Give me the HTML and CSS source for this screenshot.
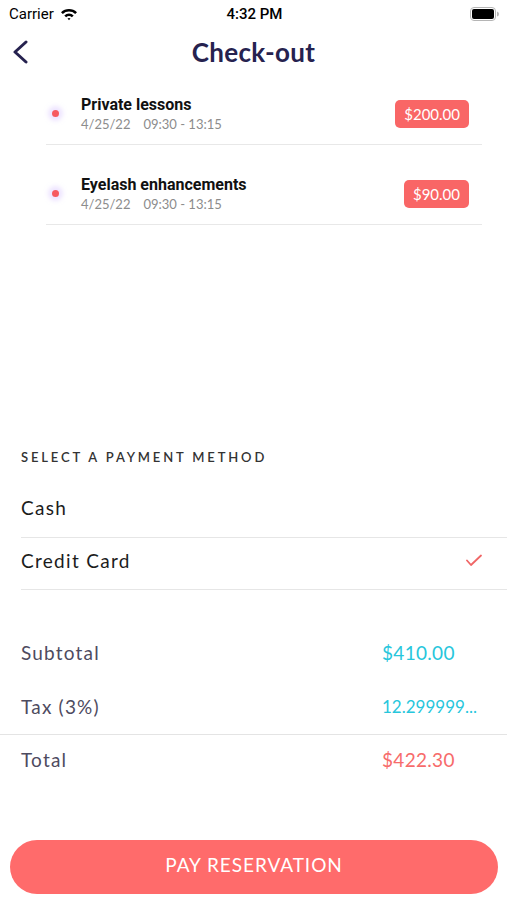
FILE: index.html
```html
<!DOCTYPE html>
<html lang="en">
<head>
  <meta charset="UTF-8">
  <meta name="viewport" content="width=device-width, initial-scale=1.0">
  <title>Check-out</title>
  <link rel="stylesheet" href="styles.css">
</head>
<body>
  <div class="status-bar">
    <div class="carrier">
      Carrier
      <svg class="wifi" width="18" height="14" viewBox="0 0 18 14">
        <path d="M1 5.2 A11.5 11.5 0 0 1 17 5.2 L15.2 7 A9 9 0 0 0 2.8 7 Z" fill="#000"/>
        <path d="M4.3 8.4 A6.8 6.8 0 0 1 13.7 8.4 L11.9 10.2 A4.3 4.3 0 0 0 6.1 10.2 Z" fill="#000"/>
        <path d="M7.5 11.6 A2.2 2.2 0 0 1 10.5 11.6 L9 13.2 Z" fill="#000"/>
      </svg>
    </div>
    <div class="clock">4:32 PM</div>
    <svg class="battery" width="30" height="14" viewBox="0 0 30 14">
      <rect x="0.5" y="0.5" width="25" height="13" rx="3.5" fill="none" stroke="#b5b5b5"/>
      <rect x="2" y="2" width="22" height="10" rx="2" fill="#000"/>
      <path d="M27 4.5 Q29 5 29 7 Q29 9 27 9.5 Z" fill="#b5b5b5"/>
    </svg>
  </div>

  <header class="nav-bar">
    <svg class="back" width="16" height="24" viewBox="0 0 16 24">
      <polyline points="14,2 3,12 14,22" fill="none" stroke="#26224f" stroke-width="3" stroke-linecap="round" stroke-linejoin="round"/>
    </svg>
    <h1>Check-out</h1>
  </header>

  <ul class="services">
    <li class="service">
      <span class="dot"></span>
      <div class="service-info">
        <div class="service-name">Private lessons</div>
        <div class="service-time"><span>4/25/22</span><span>09:30 - 13:15</span></div>
      </div>
      <span class="price">$200.00</span>
    </li>
    <li class="service">
      <span class="dot"></span>
      <div class="service-info">
        <div class="service-name">Eyelash enhancements</div>
        <div class="service-time"><span>4/25/22</span><span>09:30 - 13:15</span></div>
      </div>
      <span class="price">$90.00</span>
    </li>
  </ul>

  <section class="payment">
    <h2>Select a payment method</h2>
    <div class="method">Cash</div>
    <div class="method">
      Credit Card
      <svg class="check" width="16" height="13" viewBox="0 0 16 13">
        <polyline points="1,6.5 5,11 15,1.5" fill="none" stroke="#f06666" stroke-width="1.8" stroke-linecap="round" stroke-linejoin="round"/>
      </svg>
    </div>
  </section>

  <section class="summary">
    <div class="summary-row">
      <span class="label">Subtotal</span>
      <span class="value">$410.00</span>
    </div>
    <div class="summary-row">
      <span class="label">Tax (3%)</span>
      <span class="value tax">12.299999...</span>
    </div>
    <div class="summary-row total">
      <span class="label">Total</span>
      <span class="value">$422.30</span>
    </div>
  </section>

  <button class="pay-btn">PAY RESERVATION</button>
</body>
</html>
```

FILE: styles.css
```css
* {
  box-sizing: border-box;
}
body {
  margin: 0;
  width: 507px;
  min-height: 900px;
  display: flex;
  flex-direction: column;
  font-family: Lato, "Open Sans", sans-serif;
  background-color: #fff;
  color: #222;
}
.status-bar {
  height: 28px;
  display: flex;
  align-items: center;
  justify-content: space-between;
  padding: 0 7px 0 9px;
  font-family: Roboto, "Liberation Sans", sans-serif;
  font-size: 15px;
  color: #000;
}
.carrier {
  display: flex;
  align-items: center;
  gap: 6px;
  width: 120px;
}
.clock {
  font-weight: 500;
}
.status-bar .battery {
  display: block;
  width: 30px;
  margin-left: 90px;
}
.nav-bar {
  height: 48px;
  position: relative;
  display: flex;
  align-items: center;
  justify-content: center;
}
.back {
  position: absolute;
  left: 12px;
  top: 12px;
}
.nav-bar h1 {
  margin: 0;
  font-size: 26px;
  font-weight: 700;
  color: #26224f;
  letter-spacing: 0.3px;
}
.services {
  list-style: none;
  margin: 0 25px 0 46px;
  padding: 0;
}
.service {
  display: flex;
  align-items: center;
  padding: 30px 13px 12px 0;
  border-bottom: 1px solid #e8e8e8;
}
.service:first-child {
  padding-top: 19px;
}
.dot {
  width: 7px;
  height: 7px;
  border-radius: 50%;
  background-color: #f65a5f;
  margin-left: 6px;
  margin-right: 22px;
  box-shadow: 0 0 4px 4px rgba(222, 204, 255, 0.5);
}
.service-info {
  flex: 1;
}
.service-name {
  font-family: Roboto, "Liberation Sans", sans-serif;
  font-weight: 700;
  font-size: 16px;
  line-height: 20px;
  color: #111;
}
.service-time {
  margin-top: 1px;
  font-size: 13px;
  line-height: 16px;
  color: #8c8c8c;
  display: flex;
  gap: 13px;
}
.price {
  background-color: #f96666;
  color: #fff;
  font-size: 15px;
  height: 28px;
  line-height: 28px;
  padding: 0 9px;
  border-radius: 5px;
}
.payment {
  margin-top: 222px;
  padding-left: 21px;
}
.payment h2 {
  margin: 0 0 18px;
  font-size: 13px;
  font-weight: 600;
  line-height: 20px;
  letter-spacing: 2.85px;
  text-transform: uppercase;
  color: #333;
}
.method {
  height: 52px;
  display: flex;
  align-items: center;
  justify-content: space-between;
  padding: 0 25px 7px 0;
  font-size: 19px;
  letter-spacing: 1.3px;
  color: #1c1c1c;
  border-bottom: 1px solid #e6e6e6;
}
.method:first-of-type {
  height: 53px;
}
.summary {
  margin-top: 36px;
}
.summary-row {
  display: grid;
  grid-template-columns: 1fr 100px;
  align-items: center;
  height: 54px;
  padding: 0 25px 2px 21px;
  font-size: 19px;
}
.summary-row .label {
  color: #4e4b5f;
  letter-spacing: 1.2px;
}
.summary-row .value {
  color: #27c6dc;
  white-space: nowrap;
  letter-spacing: 0.3px;
}
.summary-row .tax {
  font-size: 17px;
  letter-spacing: 0;
}
.summary-row.total {
  border-top: 1px solid #e4e4e4;
  height: 52px;
}
.summary-row.total .value {
  color: #f76b6b;
}
.pay-btn {
  margin: auto 9px 6px 10px;
  height: 54px;
  padding-bottom: 6px;
  border: none;
  border-radius: 27px;
  background-color: #ff6b6b;
  color: #fff;
  font-family: Lato, "Open Sans", sans-serif;
  font-size: 19px;
  letter-spacing: 0.95px;
  cursor: pointer;
}
```
